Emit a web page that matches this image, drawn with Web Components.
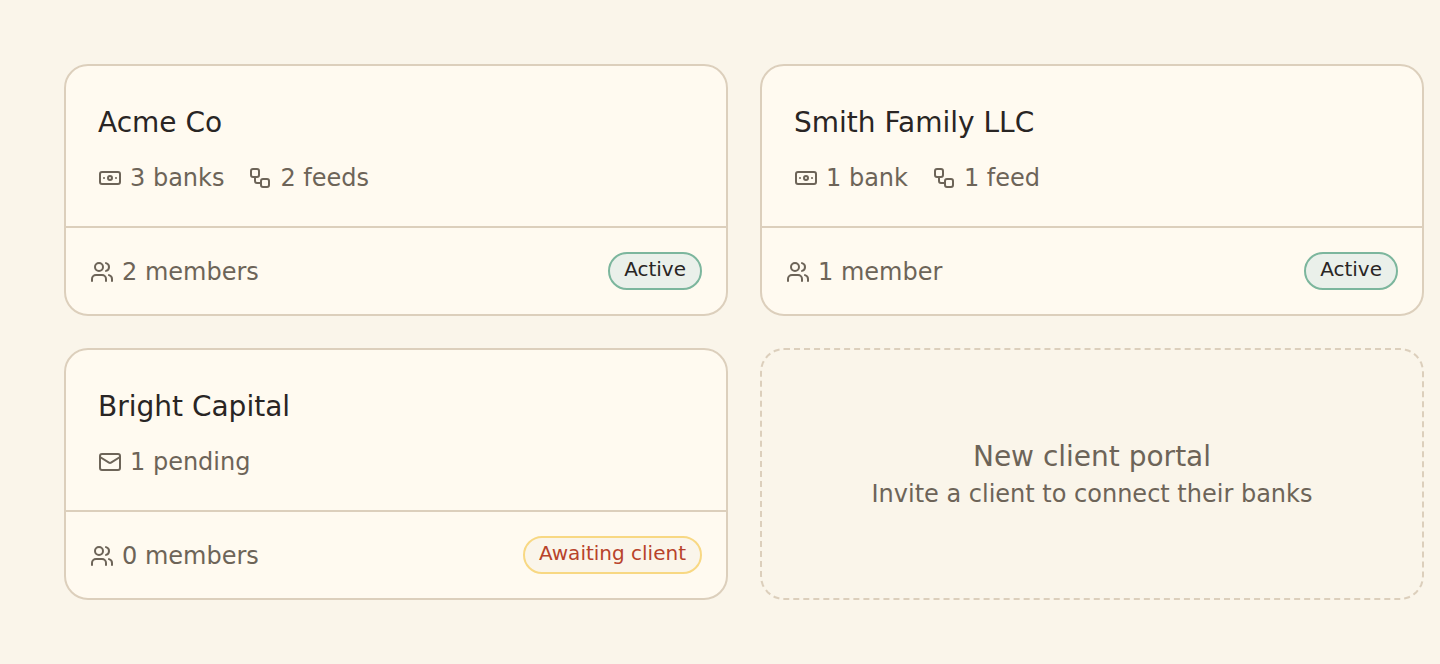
<!DOCTYPE html>
<html lang="en">
<head>
<meta charset="utf-8">
<meta name="viewport" content="width=device-width, initial-scale=1">
<title>Client portals</title>
<style>
  body { margin: 0; background: #faf5ea; color: #292524; font-family: "DejaVu Sans", sans-serif; }
</style>
</head>
<body>
<portal-grid>
  <portal-card name="Acme Co">
    <meta-item slot="meta" icon="banknote">3 banks</meta-item>
    <meta-item slot="meta" icon="workflow">2 feeds</meta-item>
    <meta-item slot="members" icon="users">2 members</meta-item>
    <status-badge slot="status">Active</status-badge>
  </portal-card>
  <portal-card name="Smith Family LLC">
    <meta-item slot="meta" icon="banknote">1 bank</meta-item>
    <meta-item slot="meta" icon="workflow">1 feed</meta-item>
    <meta-item slot="members" icon="users">1 member</meta-item>
    <status-badge slot="status">Active</status-badge>
  </portal-card>
  <portal-card name="Bright Capital">
    <meta-item slot="meta" icon="mail">1 pending</meta-item>
    <meta-item slot="members" icon="users">0 members</meta-item>
    <status-badge slot="status" tone="waiting">Awaiting client</status-badge>
  </portal-card>
  <new-portal>
    New client portal
    <span slot="hint">Invite a client to connect their banks</span>
  </new-portal>
</portal-grid>
<script>
  class ShadowElement extends HTMLElement {
    constructor() {
      super();
      this.attachShadow({ mode: "open" });
    }
    connectedCallback() {
      this.shadowRoot.innerHTML = this.render();
    }
  }

  customElements.define("portal-grid", class extends ShadowElement {
    render() {
      return `
        <style>
          :host { display: block; padding: 64px 16px 64px 64px; }
          main { display: grid; grid-template-columns: repeat(2, minmax(0, 1fr)); gap: 32px; }
          @media (max-width: 800px) { main { grid-template-columns: minmax(0, 1fr); } }
        </style>
        <main><slot></slot></main>`;
    }
  });

  customElements.define("portal-card", class extends ShadowElement {
    render() {
      return `
        <style>
          :host { display: block; }
          article { border: 2px solid #dccfbc; border-radius: 24px; background: #fffaf0; }
          .body { padding: 32px 32px 30px; }
          h2 { margin: 0 0 12px; font-size: 28px; line-height: 50px; font-weight: 400; }
          .meta { display: flex; flex-wrap: wrap; gap: 24px; }
          footer { display: flex; align-items: flex-end; justify-content: space-between;
                   padding: 24px; border-top: 2px solid #dccfbc; }
        </style>
        <article>
          <div class="body">
            <h2></h2>
            <div class="meta"><slot name="meta"></slot></div>
          </div>
          <footer><slot name="members"></slot><slot name="status"></slot></footer>
        </article>`;
    }
    connectedCallback() {
      super.connectedCallback();
      this.shadowRoot.querySelector("h2").textContent = this.getAttribute("name");
    }
  });

  const icons = {
    banknote: '<rect x="2" y="6" width="20" height="12" rx="2"/><circle cx="12" cy="12" r="2"/><path d="M6 12h.01M18 12h.01"/>',
    workflow: '<rect x="3" y="3" width="8" height="8" rx="2"/><path d="M7 11v4a2 2 0 0 0 2 2h4"/><rect x="13" y="13" width="8" height="8" rx="2"/>',
    users: '<path d="M16 21v-2a4 4 0 0 0-4-4H6a4 4 0 0 0-4 4v2"/><circle cx="9" cy="7" r="4"/><path d="M22 21v-2a4 4 0 0 0-3-3.87"/><path d="M16 3.13a4 4 0 0 1 0 7.75"/>',
    mail: '<rect x="2" y="4" width="20" height="16" rx="2"/><path d="m22 7-8.97 5.7a1.94 1.94 0 0 1-2.06 0L2 7"/>'
  };

  customElements.define("meta-item", class extends ShadowElement {
    render() {
      return `
        <style>
          :host { display: flex; align-items: center; gap: 8px; color: #6d6458;
                  font-size: 24px; line-height: 36px; }
          svg { width: 24px; height: 24px; flex: none; fill: none; stroke: currentColor;
                stroke-width: 2; stroke-linecap: round; stroke-linejoin: round; }
        </style>
        <svg viewBox="0 0 24 24" aria-hidden="true">${icons[this.getAttribute("icon")]}</svg>
        <span><slot></slot></span>`;
    }
  });

  customElements.define("status-badge", class extends ShadowElement {
    render() {
      return `
        <style>
          :host { display: block; padding: 2px 14px 6px; border: 2px solid #7cb69d;
                  border-radius: 20px; background: #eaf0ea; font-size: 20px; line-height: 26px; }
          :host([tone="waiting"]) { border-color: #f8d883; background: #faf5ea; color: #b8432a; }
        </style>
        <slot></slot>`;
    }
  });

  customElements.define("new-portal", class extends ShadowElement {
    render() {
      return `
        <style>
          :host { display: grid; }
          button { display: flex; flex-direction: column; align-items: center; justify-content: center;
                   padding: 32px; border: 2px dashed #dccfbc; border-radius: 24px;
                   background: transparent; color: #6d6458; font: inherit; cursor: pointer; }
          .title { font-size: 28px; line-height: 40px; }
          .hint { font-size: 24px; line-height: 34px; }
        </style>
        <button type="button">
          <span class="title"><slot></slot></span>
          <span class="hint"><slot name="hint"></slot></span>
        </button>`;
    }
  });
</script>
</body>
</html>
